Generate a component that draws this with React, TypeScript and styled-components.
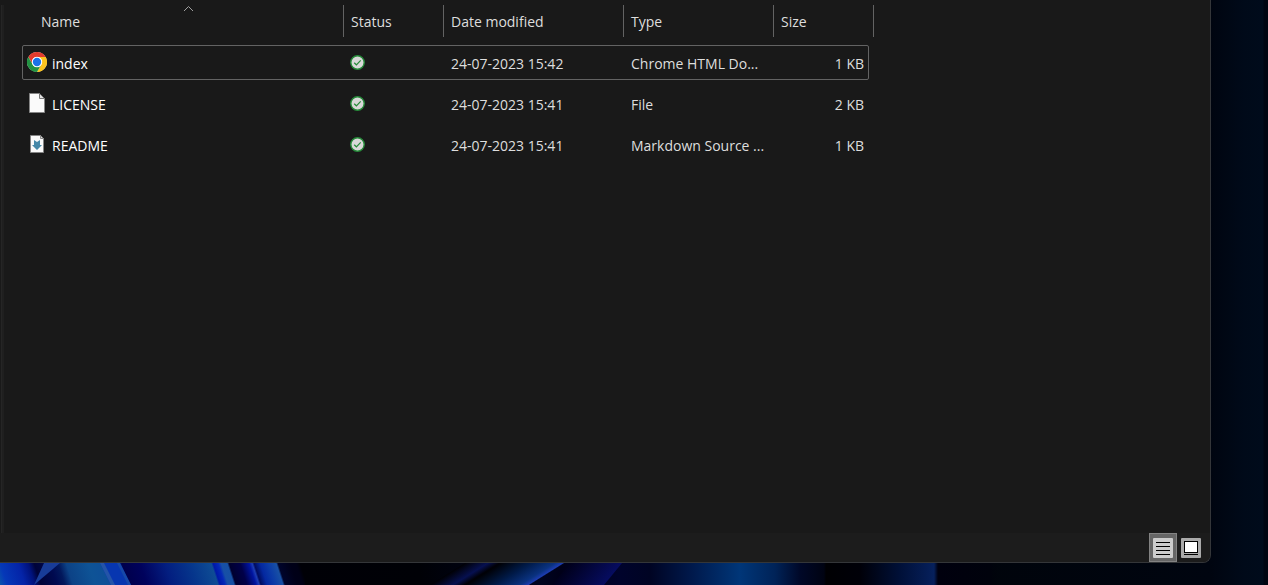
import React from "react";
import styled, { createGlobalStyle } from "styled-components";

const GlobalStyle = createGlobalStyle`
  * { box-sizing: border-box; }
  body { margin: 0; background: #00030a; }
  button { font: inherit; color: inherit; background: none; border: 0; padding: 0; }
`;

const Desktop = styled.div`
  position: relative;
  display: flex;
  min-height: 100vh;
  padding: 0 57px 22px 0;
  overflow: hidden;
  font-family: "Segoe UI", "Open Sans", "Noto Sans", sans-serif;
  font-size: 14px;
  line-height: 20px;
  color: #dedede;
  background: linear-gradient(to left, #000511 0, #000511 4px, #000b1b 5px, #000a19 24px, #000510 57px, #00040b 300px);
`;

const Wallpaper = styled.svg`
  position: absolute;
  left: 0;
  bottom: 0;
`;

const Window = styled.main`
  position: relative;
  flex: 1;
  display: flex;
  flex-direction: column;
  background: #191919;
  border: solid #343639;
  border-width: 0 1px 1px 0;
  border-bottom-right-radius: 8px;
  overflow: hidden;
`;

const Content = styled.div`
  flex: 1;
  display: flex;
  padding-top: 5px;
`;

const Splitter = styled.div`
  width: 4px;
  margin-right: 18px;
  background: #252525;
  border-left: 1px solid #191919;
  border-right: 2px solid #1f1f1f;
`;

const FileTable = styled.table`
  display: block;
  flex: 1;
`;

const TableHead = styled.thead`
  display: block;
`;

const TableBody = styled.tbody`
  display: flex;
  flex-direction: column;
  gap: 6px;
  padding-top: 8px;
`;

const HeaderRow = styled.tr`
  display: grid;
  grid-template-columns: 322px 100px 180px 150px 100px;
`;

const HeaderCell = styled.th<{ $indent?: number }>`
  position: relative;
  height: 32px;
  padding: 0 0 0 ${(p) => p.$indent ?? 7}px;
  border-right: 1px solid #636363;
  font-weight: 400;
  text-align: left;
`;

const HeaderButton = styled.button`
  display: block;
  width: 100%;
  height: 32px;
  padding-top: 2px;
  text-align: left;
`;

const SortMark = styled.svg`
  position: absolute;
  top: 0;
  left: 161px;
`;

const FileRow = styled.tr<{ $focused?: boolean }>`
  display: grid;
  grid-template-columns: 322px 100px 180px 150px 95px;
  width: 847px;
  height: 35px;
  align-items: center;
  border-radius: 2px;
  outline: ${(p) => (p.$focused ? "1px solid #636363" : "none")};
  outline-offset: -1px;
`;

const Cell = styled.td<{ $right?: boolean }>`
  padding: 2px 5px 0 7px;
  text-align: ${(p) => (p.$right ? "right" : "left")};
  white-space: nowrap;
`;

const NameCell = styled.td`
  display: flex;
  align-items: flex-start;
  gap: 5px;
  padding: 0 0 0 5px;
  color: #ffffff;
`;

const FileName = styled.span`
  padding-top: 2px;
`;

const StatusCell = styled.td`
  display: flex;
  padding: 0 0 0 6px;
`;

const StatusBar = styled.footer`
  display: flex;
  justify-content: flex-end;
  padding-right: 5px;
  background: #1c1c1c;
`;

const ViewButton = styled.button<{ $active?: boolean }>`
  display: grid;
  place-items: center;
  width: 28px;
  height: 29px;
  background: ${(p) => (p.$active ? "#666666" : "transparent")};
  border: 1px solid ${(p) => (p.$active ? "#838383" : "transparent")};
`;

const ChromeIcon = () => (
  <svg width="20" height="20" viewBox="0 0 48 48" aria-hidden="true">
    <circle cx="24" cy="24" r="24" fill="#fff" />
    <path d="M3.2 12A24 24 0 0 1 44.8 12H24a12 12 0 0 0-10.4 18Z" fill="#e33b2e" />
    <path d="M44.8 12A24 24 0 0 1 24 48L34.4 30A12 12 0 0 0 24 12Z" fill="#fcc31e" />
    <path d="M24 48A24 24 0 0 1 3.2 12L13.6 30A12 12 0 0 0 34.4 30Z" fill="#229342" />
    <circle cx="24" cy="24" r="12.5" fill="#fff" />
    <circle cx="24" cy="24" r="10" fill="#1a73e8" />
  </svg>
);

const PageIcon = () => (
  <svg width="20" height="20" viewBox="0 0 20 20" aria-hidden="true">
    <path d="M2.5.5h10l5 5v14h-15z" fill="#fafafa" stroke="#858585" />
    <path d="M12.5.5v5h5z" fill="#e2e2e2" stroke="#777" />
  </svg>
);

const MarkdownIcon = () => (
  <svg width="20" height="20" viewBox="0 0 20 20" aria-hidden="true">
    <path d="M3.5 1.5h10l3 3v14h-13z" fill="#fafafa" stroke="#858585" />
    <path d="M13.5 1.5v3h3z" fill="#ddd" stroke="#888" />
    <path d="M7 6l3 2 3-2v5h2l-5 5-5-5h2z" fill="#4588a8" />
  </svg>
);

const SyncedIcon = () => (
  <svg width="15" height="15" viewBox="0 0 15 15" role="img" aria-label="Available">
    <circle cx="7.5" cy="7.5" r="6.7" fill="#d8d8d8" stroke="#258b39" strokeWidth="1.4" />
    <path d="M4.2 7.7l2.2 2.1 4.3-4.4" fill="none" stroke="#258b39" strokeWidth="1.2" />
  </svg>
);

const files = [
  { name: "index", icon: <ChromeIcon />, date: "24-07-2023 15:42", type: "Chrome HTML Do...", size: "1 KB" },
  { name: "LICENSE", icon: <PageIcon />, date: "24-07-2023 15:41", type: "File", size: "2 KB" },
  { name: "README", icon: <MarkdownIcon />, date: "24-07-2023 15:41", type: "Markdown Source ...", size: "1 KB" },
];

type Stops = [number, string, number?][];
type GradientProps = { id: string; x1: number; x2: number; skew?: number; stops: Stops };
const Gradient = ({ id, x1, x2, skew = 0, stops }: GradientProps) => (
  <linearGradient
    id={id}
    gradientUnits="userSpaceOnUse"
    gradientTransform={`skewX(${skew})`}
    x1={x1}
    x2={x2}
    y1="0"
    y2="0"
  >
    {stops.map(([at, color, opacity], i) => (
      <stop key={i} offset={(at - x1) / (x2 - x1)} stopColor={color} stopOpacity={opacity ?? 1} />
    ))}
  </linearGradient>
);

const Bloom = () => (
  <Wallpaper width="1268" height="30" viewBox="0 -8 1268 30" aria-hidden="true">
    <defs>
      <Gradient id="left" x1={-10} x2={310} skew={18} stops={[
        [-10, "#0a60a8"], [0, "#0538b8"], [18, "#0424a8"], [28, "#00127c"], [34, "#000338"],
        [50, "#000a50"], [58, "#02185c"], [66, "#0c4286"], [88, "#0e5396"], [104, "#0e4f98"],
        [118, "#031a80"], [122, "#00004c"], [140, "#00025c"], [165, "#031e80"], [190, "#06368c"],
        [211, "#0e4c94"], [213, "#0018a8"], [218, "#0428b8"], [221, "#174fa6"], [227, "#1650a4"],
        [229, "#000030"], [240, "#000048"], [249, "#0014a0"], [252, "#1c3cb4"], [254, "#000c60"],
        [260, "#0428a0"], [268, "#0c3ca8"], [276, "#1850a4"], [278, "#00042c"], [290, "#000018"],
        [296, "#000016"], [300, "#000006"], [310, "#000006"]]} />
      <Gradient id="right" x1={290} x2={1000} stops={[
        [290, "#000006"], [420, "#000106"],
        [540, "#000420"], [560, "#000018"], [620, "#00032c"], [650, "#000423"], [690, "#00184a"],
        [740, "#003678"], [775, "#002358"], [800, "#000828"], [824, "#000312"], [826, "#000003"],
        [860, "#000008"], [900, "#001038"], [934, "#06205c"], [938, "#00000e"], [990, "#00020c"],
        [1000, "#00040b", 0]]} />
      <Gradient id="ray" x1={465} x2={500} skew={-58} stops={[[465, "#000004"], [488, "#061050"], [500, "#000004"]]} />
      <Gradient id="sweep" x1={500} x2={565} skew={-58} stops={[[500, "#000004"], [530, "#001a48"], [555, "#0a3280"], [563, "#1c3cb0"], [565, "#000420"]]} />
      <Gradient id="violet" x1={570} x2={622} skew={-39} stops={[[570, "#00001c"], [622, "#060c60"]]} />
    </defs>
    <rect x="285" y="-8" width="715" height="30" fill="url(#right)" />
    <rect x="0" y="-8" width="305" height="30" fill="url(#left)" />
    <path d="M44 0H60L34 22Z" fill="#183c98" />
    <path d="M100 0H120L131 22H111Z" fill="#0736b0" />
    <path d="M100 0h4l11 22h-4z" fill="#2454a8" />
    <path d="M117 0h3l11 22h-3z" fill="#1648a8" />
    <path d="M465 0h35l-35 22h-35z" fill="url(#ray)" />
    <path d="M500 0H565L530 22H465Z" fill="url(#sweep)" />
    <path d="M570 0H622L604 22H552Z" fill="url(#violet)" />
  </Wallpaper>
);

export default function App() {
  return (
    <Desktop>
      <GlobalStyle />
      <Bloom />
      <Window>
        <Content>
          <Splitter />
          <FileTable>
            <TableHead>
              <HeaderRow>
                <HeaderCell $indent={19} aria-sort="ascending">
                  <HeaderButton>Name</HeaderButton>
                  <SortMark width="11" height="8" viewBox="0 0 11 8" aria-hidden="true">
                    <path d="M1 6l4.500-4.500L10 6" fill="none" stroke="#a0a0a0" />
                  </SortMark>
                </HeaderCell>
                {["Status", "Date modified", "Type", "Size"].map((title) => (
                  <HeaderCell key={title}>
                    <HeaderButton>{title}</HeaderButton>
                  </HeaderCell>
                ))}
              </HeaderRow>
            </TableHead>
            <TableBody>
              {files.map((file, index) => (
                <FileRow key={file.name} $focused={index === 0}>
                  <NameCell>
                    {file.icon}
                    <FileName>{file.name}</FileName>
                  </NameCell>
                  <StatusCell><SyncedIcon /></StatusCell>
                  <Cell>{file.date}</Cell>
                  <Cell>{file.type}</Cell>
                  <Cell $right>{file.size}</Cell>
                </FileRow>
              ))}
            </TableBody>
          </FileTable>
        </Content>
        <StatusBar>
          <ViewButton $active aria-label="Details view">
            <svg width="20" height="20" viewBox="0 0 20 20" aria-hidden="true">
              <rect width="20" height="20" rx="1" fill="#cccccc" />
              <path d="M3 4.500h14M3 8.500h14M3 12.500h14M3 16.500h14" stroke="#000" />
            </svg>
          </ViewButton>
          <ViewButton aria-label="Large icons view">
            <svg width="20" height="20" viewBox="0 0 20 20" aria-hidden="true">
              <rect width="20" height="20" rx="1" fill="#aaaaaa" />
              <rect x="3.500" y="3.500" width="13" height="11" fill="#fff" stroke="#000" />
              <path d="M3 16.500h14" stroke="#000" />
            </svg>
          </ViewButton>
        </StatusBar>
      </Window>
    </Desktop>
  );
}
